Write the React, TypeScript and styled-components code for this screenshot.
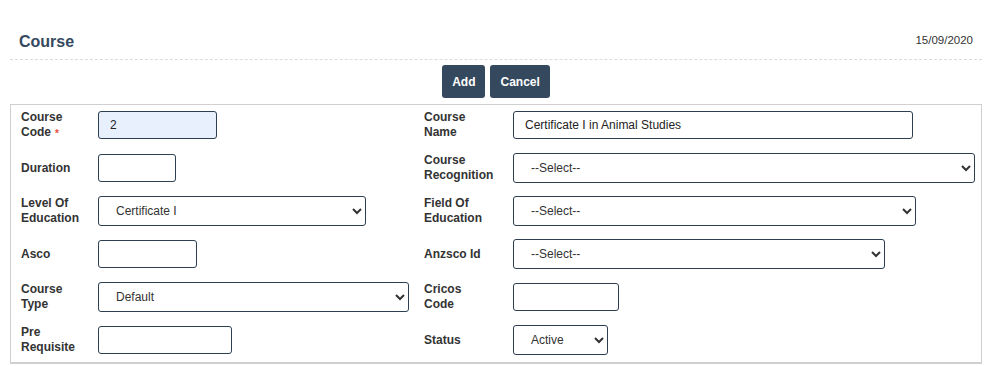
import styled, { createGlobalStyle } from "styled-components";

const GlobalStyle = createGlobalStyle`
  body {
    margin: 0;
    background: #fff;
    font-family: "Liberation Sans", Arial, sans-serif;
  }
`;

type Field = {
  label: string;
  required?: boolean;
  kind: "input" | "select";
  width?: number;
  value?: string;
  filled?: boolean;
};

const rows: [Field, Field][] = [
  [
    { label: "Course Code", required: true, kind: "input", width: 119, value: "2", filled: true },
    { label: "Course Name", kind: "input", width: 400, value: "Certificate I in Animal Studies" },
  ],
  [
    { label: "Duration", kind: "input", width: 78 },
    { label: "Course Recognition", kind: "select", value: "--Select--" },
  ],
  [
    { label: "Level Of Education", kind: "select", width: 268, value: "Certificate I" },
    { label: "Field Of Education", kind: "select", width: 403, value: "--Select--" },
  ],
  [
    { label: "Asco", kind: "input", width: 99 },
    { label: "Anzsco Id", kind: "select", width: 372, value: "--Select--" },
  ],
  [
    { label: "Course Type", kind: "select", width: 311, value: "Default" },
    { label: "Cricos Code", kind: "input", width: 106 },
  ],
  [
    { label: "Pre Requisite", kind: "input", width: 134 },
    { label: "Status", kind: "select", width: 95, value: "Active" },
  ],
];

function FieldCells({ f }: { f: Field }) {
  return (
    <>
      <Label>
        {f.label}
        {f.required && <Star>*</Star>}
      </Label>
      <Cell>
        {f.kind === "input" ? (
          <TextInput $w={f.width} $filled={f.filled} defaultValue={f.value ?? ""} />
        ) : (
          <Select $w={f.width} defaultValue={f.value}>
            <option>{f.value}</option>
          </Select>
        )}
      </Cell>
    </>
  );
}

export default function App() {
  return (
    <Page>
      <GlobalStyle />
      <Header>
        <Title>Course</Title>
        <DateText>15/09/2020</DateText>
      </Header>
      <ButtonBar>
        <Button>Add</Button>
        <Button>Cancel</Button>
      </ButtonBar>
      <Panel>
        {rows.map(([a, b]) => (
          <>
            <FieldCells key={a.label} f={a} />
            <FieldCells key={b.label} f={b} />
          </>
        ))}
      </Panel>
    </Page>
  );
}

const Page = styled.div`
  padding: 0 10px;
`;

const Header = styled.div`
  display: flex;
  justify-content: space-between;
  align-items: flex-end;
  padding: 32px 9px 8px 9px;
  border-bottom: 1px dashed #dcdcdc;
`;

const Title = styled.h2`
  margin: 0;
  font-size: 16px;
  line-height: 18px;
  font-weight: bold;
  color: #34495e;
`;

const DateText = styled.span`
  font-size: 11.5px;
  line-height: 16px;
  color: #333;
  margin-bottom: 3px;
`;

const ButtonBar = styled.div`
  display: flex;
  justify-content: center;
  gap: 5px;
  margin: 5px 0 6px;
`;

const Button = styled.button`
  height: 33px;
  padding: 0 10px;
  border: none;
  border-radius: 3px;
  background: #34495e;
  color: #fff;
  font-family: "Liberation Sans", Arial, sans-serif;
  font-size: 12px;
  font-weight: bold;
  cursor: pointer;
`;

const Panel = styled.div`
  display: grid;
  grid-template-columns: 77px 326px 89px 1fr;
  grid-auto-rows: 30px;
  row-gap: 13px;
  align-items: center;
  border: 1px solid #cfcfcf;
  border-bottom-width: 2px;
  padding: 5px 6px 7px 10px;
`;

const Label = styled.label`
  max-width: 70px;
  font-size: 12px;
  line-height: 15px;
  font-weight: bold;
  color: #333;
`;

const Star = styled.span`
  display: inline-block;
  margin-left: 4px;
  line-height: 12px;
  vertical-align: top;
  padding-top: 3px;
  color: #e74c3c;
  font-size: 10px;
`;

const Cell = styled.div`
  display: flex;
  align-items: center;
`;

const TextInput = styled.input<{ $w?: number; $filled?: boolean }>`
  box-sizing: border-box;
  width: ${(p) => (p.$w ? `${p.$w}px` : "100%")};
  height: 28px;
  padding: 0 11px;
  border: 1px solid #2c3e50;
  border-radius: 3px;
  background: ${(p) => (p.$filled ? "#e8f0fe" : "#fff")};
  font-family: "Liberation Sans", Arial, sans-serif;
  font-size: 12px;
  color: #222;
  outline: none;
`;

const Select = styled.select<{ $w?: number }>`
  box-sizing: border-box;
  width: ${(p) => (p.$w ? `${p.$w}px` : "100%")};
  height: 30px;
  padding: 0 10px 0 13px;
  border: 1px solid #2c3e50;
  border-radius: 3px;
  background: #fff;
  font-family: "Liberation Sans", Arial, sans-serif;
  font-size: 12px;
  color: #333;
  outline: none;
`;
